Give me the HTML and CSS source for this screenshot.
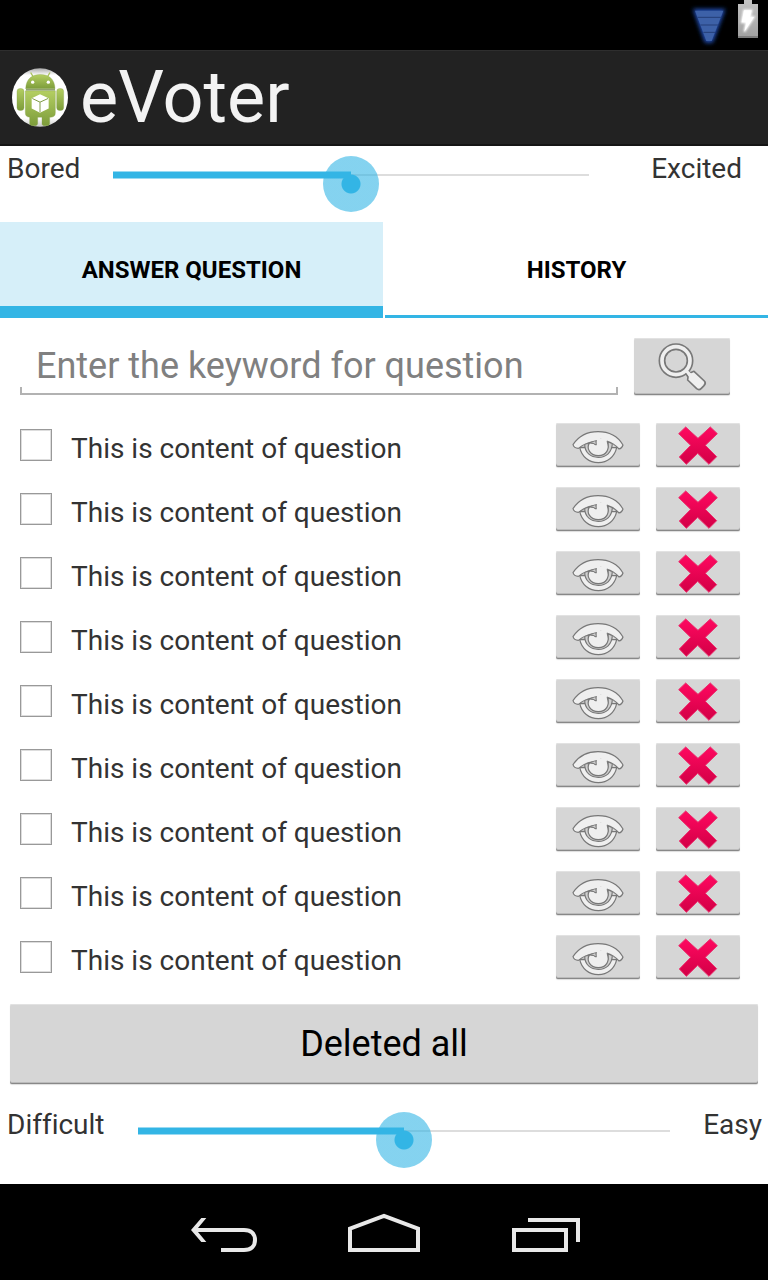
FILE: index.html
```html
<!DOCTYPE html>
<html lang="en">
<head>
<meta charset="utf-8">
<meta name="viewport" content="width=device-width, initial-scale=1">
<title>eVoter</title>
<link rel="stylesheet" href="styles.css">
</head>
<body>
<svg width="0" height="0" class="defs" aria-hidden="true">
  <defs>
    <linearGradient id="green" x1="0" y1="0" x2="0" y2="1"><stop offset="0" stop-color="#b4cf62"/><stop offset="1" stop-color="#7c9c3a"/></linearGradient>
    <linearGradient id="disc" x1="0" y1="0" x2="0" y2="1"><stop offset="0" stop-color="#a8a8a8"/><stop offset="0.12" stop-color="#fff"/><stop offset="0.85" stop-color="#fff"/><stop offset="1" stop-color="#c8c8c8"/></linearGradient>
    <linearGradient id="battery" x1="0" y1="0" x2="0" y2="1"><stop offset="0" stop-color="#c4c4c4"/><stop offset="1" stop-color="#a0a0a0"/></linearGradient>
    <linearGradient id="red" x1="0" y1="0" x2="0" y2="1"><stop offset="0" stop-color="#ff0860"/><stop offset="1" stop-color="#d20046"/></linearGradient>
    <filter id="glow" x="-50%" y="-50%" width="200%" height="200%"><feGaussianBlur stdDeviation="7"/></filter>
    <filter id="soft" x="-50%" y="-50%" width="200%" height="200%"><feGaussianBlur stdDeviation="3"/></filter>
  </defs>
  <symbol id="eye" viewBox="18 25 252 132">
    <g fill="#efefef" stroke="#787878" stroke-width="3.5" stroke-linejoin="round">
      <path d="M89 98C95 126 117 144 145 144S194 126 200 99Z"/>
      <path d="M104 88C104 114 122 128 145 128S186 114 187 86L174 82V96C172 112 160 121 146 121C131 121 119 112 118 98L117 86Z" fill="#d0d0d0"/>
      <path d="M69 90C86 64 112 51 144 51S203 64 219 91C217 97 213 102 207 103C198 93 185 83 170 79C160 76 148 76 139 78L138 91C135 84 130 81 124 82C108 84 96 93 85 101C78 101 71 97 69 90Z"/>
      <path d="M119 84C107 102 121 123 145 123C169 123 181 103 171 80L152 74L139 91L130 86Z"/>
    </g>
    <path d="M141 72H172L169 86L160 98L137 96L139 88Z" fill="#efefef"/>
    <path d="M119 84L137 78L139 91L130 86Z" fill="#d0d0d0" stroke="#707070" stroke-width="2.5" stroke-linejoin="round"/>
  </symbol>
  <symbol id="cross" viewBox="318 25 252 132">
    <path d="M407 37L444 71L481 37L502 57L466 92L500 126L477 149L443 116L409 149L388 127L422 92L386 57Z" fill="url(#red)" stroke="#ea2f6c" stroke-width="3" stroke-linejoin="round"/>
  </symbol>
</svg>

<div class="status">
  <svg class="status-icons" viewBox="0 0 264 150" aria-label="Signal and battery">
    <path d="M39 27H136L98 128H75Z" fill="#2250b8" filter="url(#glow)"/>
    <path d="M45 32H130L95 123H79Z" fill="#3d61a8"/>
    <path d="M52 52H124M61 75H115M70 97H105" stroke="#243e78" stroke-width="3"/>
    <path d="M192 0H216V12H234V114H174V12H192Z" fill="url(#battery)"/>
    <path d="M174 111H234" stroke="#777" stroke-width="5"/>
    <path d="M192 31H215L210 51H222L193 95L199 67H185Z" fill="#fff" stroke="#fff" stroke-width="5" filter="url(#soft)"/>
    <path d="M192 31H215L210 51H222L193 95L199 67H185Z" fill="#fff"/>
  </svg>
</div>

<header class="bar">
  <svg class="logo" viewBox="36 56 168 176" aria-hidden="true">
    <ellipse cx="120" cy="144" rx="84" ry="88" fill="url(#disc)"/>
    <path d="M99 81L92 69M143 81L150 69" stroke="#a8c35b" stroke-width="4"/>
    <g fill="url(#green)" stroke="#839e48" stroke-width="1">
      <path d="M77 118C78 87 97 75 121 75S164 87 165 118Z"/>
      <rect x="51" y="117" width="21" height="66" rx="9"/>
      <rect x="170" y="117" width="21" height="66" rx="9"/>
      <path d="M76 124H166V190Q166 203 153 203H149V222Q149 229 137 229T126 222V203H113V222Q113 229 101 229T89 222V203Q76 203 76 190Z"/>
    </g>
    <circle cx="98" cy="98" r="5" fill="#fff"/><circle cx="145" cy="98" r="5" fill="#fff"/>
    <path d="M78 121H165" stroke="#607a31" stroke-width="3"/>
    <path d="M120 134L146 146V177L120 190L95 177V146Z" fill="#fff"/>
    <path d="M97 147L120 158L144 147M120 158V188" fill="none" stroke="#819c48" stroke-width="3"/>
  </svg>
  <h1 class="title">eVoter</h1>
</header>

<main class="main">
  <div class="seek">
    <label for="mood">Bored</label>
    <input class="range" id="mood" type="range" min="0" max="100" value="50">
    <label class="seek-end" for="mood">Excited</label>
  </div>

  <nav class="tabs">
    <button class="tab tab-on" type="button">ANSWER QUESTION</button>
    <button class="tab" type="button">HISTORY</button>
  </nav>

  <form class="search">
    <input class="field" type="text" placeholder="Enter the keyword for question" aria-label="Keyword">
    <button class="btn btn-search" type="button" aria-label="Search">
      <svg viewBox="42 25 288 171">
        <path d="M198 132L205 125L211 129L222 125L253 154Q259 160 252 168L244 176Q237 183 230 177L203 151L204 142Z" fill="#efefef" stroke="#787878" stroke-width="5" stroke-linejoin="round"/>
        <circle cx="168" cy="93" r="42" fill="none" stroke="#787878" stroke-width="21"/>
        <circle cx="168" cy="93" r="42" fill="none" stroke="#efefef" stroke-width="11"/>
        <path d="M197 122L212 137" stroke="#efefef" stroke-width="9"/>
      </svg>
    </button>
  </form>

  <ul class="list">
    <li class="row"><input class="check" type="checkbox" id="q1"><label class="text" for="q1">This is content of question</label><button class="btn btn-row" type="button" aria-label="View"><svg><use href="#eye"/></svg></button><button class="btn btn-row" type="button" aria-label="Delete"><svg><use href="#cross"/></svg></button></li>
    <li class="row"><input class="check" type="checkbox" id="q2"><label class="text" for="q2">This is content of question</label><button class="btn btn-row" type="button" aria-label="View"><svg><use href="#eye"/></svg></button><button class="btn btn-row" type="button" aria-label="Delete"><svg><use href="#cross"/></svg></button></li>
    <li class="row"><input class="check" type="checkbox" id="q3"><label class="text" for="q3">This is content of question</label><button class="btn btn-row" type="button" aria-label="View"><svg><use href="#eye"/></svg></button><button class="btn btn-row" type="button" aria-label="Delete"><svg><use href="#cross"/></svg></button></li>
    <li class="row"><input class="check" type="checkbox" id="q4"><label class="text" for="q4">This is content of question</label><button class="btn btn-row" type="button" aria-label="View"><svg><use href="#eye"/></svg></button><button class="btn btn-row" type="button" aria-label="Delete"><svg><use href="#cross"/></svg></button></li>
    <li class="row"><input class="check" type="checkbox" id="q5"><label class="text" for="q5">This is content of question</label><button class="btn btn-row" type="button" aria-label="View"><svg><use href="#eye"/></svg></button><button class="btn btn-row" type="button" aria-label="Delete"><svg><use href="#cross"/></svg></button></li>
    <li class="row"><input class="check" type="checkbox" id="q6"><label class="text" for="q6">This is content of question</label><button class="btn btn-row" type="button" aria-label="View"><svg><use href="#eye"/></svg></button><button class="btn btn-row" type="button" aria-label="Delete"><svg><use href="#cross"/></svg></button></li>
    <li class="row"><input class="check" type="checkbox" id="q7"><label class="text" for="q7">This is content of question</label><button class="btn btn-row" type="button" aria-label="View"><svg><use href="#eye"/></svg></button><button class="btn btn-row" type="button" aria-label="Delete"><svg><use href="#cross"/></svg></button></li>
    <li class="row"><input class="check" type="checkbox" id="q8"><label class="text" for="q8">This is content of question</label><button class="btn btn-row" type="button" aria-label="View"><svg><use href="#eye"/></svg></button><button class="btn btn-row" type="button" aria-label="Delete"><svg><use href="#cross"/></svg></button></li>
    <li class="row"><input class="check" type="checkbox" id="q9"><label class="text" for="q9">This is content of question</label><button class="btn btn-row" type="button" aria-label="View"><svg><use href="#eye"/></svg></button><button class="btn btn-row" type="button" aria-label="Delete"><svg><use href="#cross"/></svg></button></li>
  </ul>

  <button class="btn btn-all" type="button">Deleted all</button>

  <div class="seek seek-last">
    <label for="level">Difficult</label>
    <input class="range" id="level" type="range" min="0" max="100" value="50">
    <label for="level">Easy</label>
  </div>
</main>

<footer class="nav">
  <button class="nav-btn" type="button" aria-label="Back">
    <svg viewBox="-108 12 480 288"><path d="M48 150H192C214 150 225 162 225 180S214 210 192 210H123" fill="none" stroke="#e8e8e8" stroke-width="12"/><path d="M33 150L64 114H79L49 150L79 186H64Z" fill="#e8e8e8"/></svg>
  </button>
  <button class="nav-btn" type="button" aria-label="Home">
    <svg viewBox="372 12 480 288"><path d="M510 210V146L612 108L714 146V210Z" fill="none" stroke="#e8e8e8" stroke-width="12"/></svg>
  </button>
  <button class="nav-btn" type="button" aria-label="Recent apps">
    <svg viewBox="852 12 480 288"><path d="M1002 150H1158V210H1002ZM1044 120H1194V186" fill="none" stroke="#e8e8e8" stroke-width="12"/></svg>
  </button>
</footer>
</body>
</html>
```
FILE: styles.css
```css
* {
  box-sizing: border-box;
}

body {
  margin: 0;
  min-height: 100vh;
  display: flex;
  flex-direction: column;
  background: #fff;
  color: #333;
  font-family: Roboto, "Liberation Sans", sans-serif;
  font-size: 28px;
  font-variant-ligatures: none;
  line-height: 36px;
}

button,
input {
  margin: 0;
  padding: 0;
  border: 0;
  background: none;
  color: inherit;
  font: inherit;
}

svg {
  display: block;
}

.defs {
  position: absolute;
}

.status {
  display: flex;
  justify-content: flex-end;
  height: 50px;
  background: #000;
}

.status-icons {
  width: 88px;
  height: 50px;
}

.bar {
  display: flex;
  align-items: center;
  gap: 12px;
  height: 96px;
  padding: 0 12px;
  background: #222;
  border-top: 1px solid #2e2e2e;
  border-bottom: 2px solid #151515;
}

.logo {
  width: 56px;
  height: 59px;
}

.title {
  margin: 0;
  color: #f3f3f3;
  font-size: 72px;
  font-weight: 400;
  line-height: 84px;
}

.main {
  flex: 1;
  display: flex;
  flex-direction: column;
}

.seek {
  display: flex;
  align-items: flex-start;
  gap: 33px;
  height: 76px;
  padding: 5px 6px 0 7px;
}

.seek-end {
  padding: 0 20px 0 29px;
}

.seek-last {
  margin-top: 18px;
}

.range {
  appearance: none;
  flex: 1;
  min-width: 0;
  height: 56px;
  margin-top: 5px;
  background:
    linear-gradient(#33b5e5, #33b5e5) 0 16px / 50% 6px no-repeat,
    linear-gradient(#99daf2, #99daf2) 0 15px / 50% 8px no-repeat,
    linear-gradient(#ddd, #ddd) 0 18px / 100% 2px no-repeat;
}

.range::-webkit-slider-thumb {
  appearance: none;
  width: 56px;
  height: 56px;
  border-radius: 50%;
  background: radial-gradient(circle, #33b5e5 9px, rgba(51, 181, 229, 0.6) 10px);
}

.tabs {
  display: flex;
  gap: 2px;
}

.tab {
  flex: 1;
  height: 96px;
  padding-top: 2px;
  border-bottom: 3px solid #33b5e5;
  color: #000;
  font-size: 24px;
  font-weight: 700;
}

.tab-on {
  padding-top: 11px;
  border-bottom-width: 12px;
  background: #d6eff9;
}

.search {
  display: flex;
  gap: 16px;
  padding: 20px 38px 18px 20px;
}

.field {
  flex: 1;
  min-width: 0;
  height: 57px;
  padding: 0 16px 2px;
  background:
    linear-gradient(#b2b2b2, #b2b2b2) 0 100% / 100% 2px no-repeat,
    linear-gradient(#b2b2b2, #b2b2b2) 0 100% / 2px 8px no-repeat,
    linear-gradient(#b2b2b2, #b2b2b2) 100% 100% / 2px 8px no-repeat;
  font-size: 36px;
}

.field::placeholder {
  color: #808080;
  opacity: 1;
}

.btn {
  border-radius: 2px;
  background: #d6d6d6;
  box-shadow: inset 0 -1px #888, inset 0 -2px #bbb, inset 0 1px #e2e2e2, 0 1px 1px #ddd;
  color: #000;
}

.btn svg {
  width: 100%;
  height: 100%;
}

.btn-search {
  width: 96px;
  height: 57px;
}

.list {
  margin: 0;
  padding: 0 28px 0 20px;
  list-style: none;
}

.row {
  display: flex;
  align-items: center;
  gap: 16px;
  height: 64px;
}

.check {
  appearance: none;
  width: 32px;
  height: 32px;
  border: 1px solid #999;
  box-shadow: inset 0 0 0 1px #ddd;
}

.text {
  flex: 1;
  padding: 8px 0 0 3px;
}

.btn-row {
  width: 84px;
  height: 44px;
}

.btn-all {
  height: 80px;
  margin: 15px 10px 0;
  font-size: 36px;
}

.nav {
  display: flex;
  justify-content: center;
  height: 96px;
  background: #000;
}

.nav-btn {
  width: 160px;
  height: 96px;
}

.nav-btn svg {
  width: 100%;
  height: 100%;
}
```
